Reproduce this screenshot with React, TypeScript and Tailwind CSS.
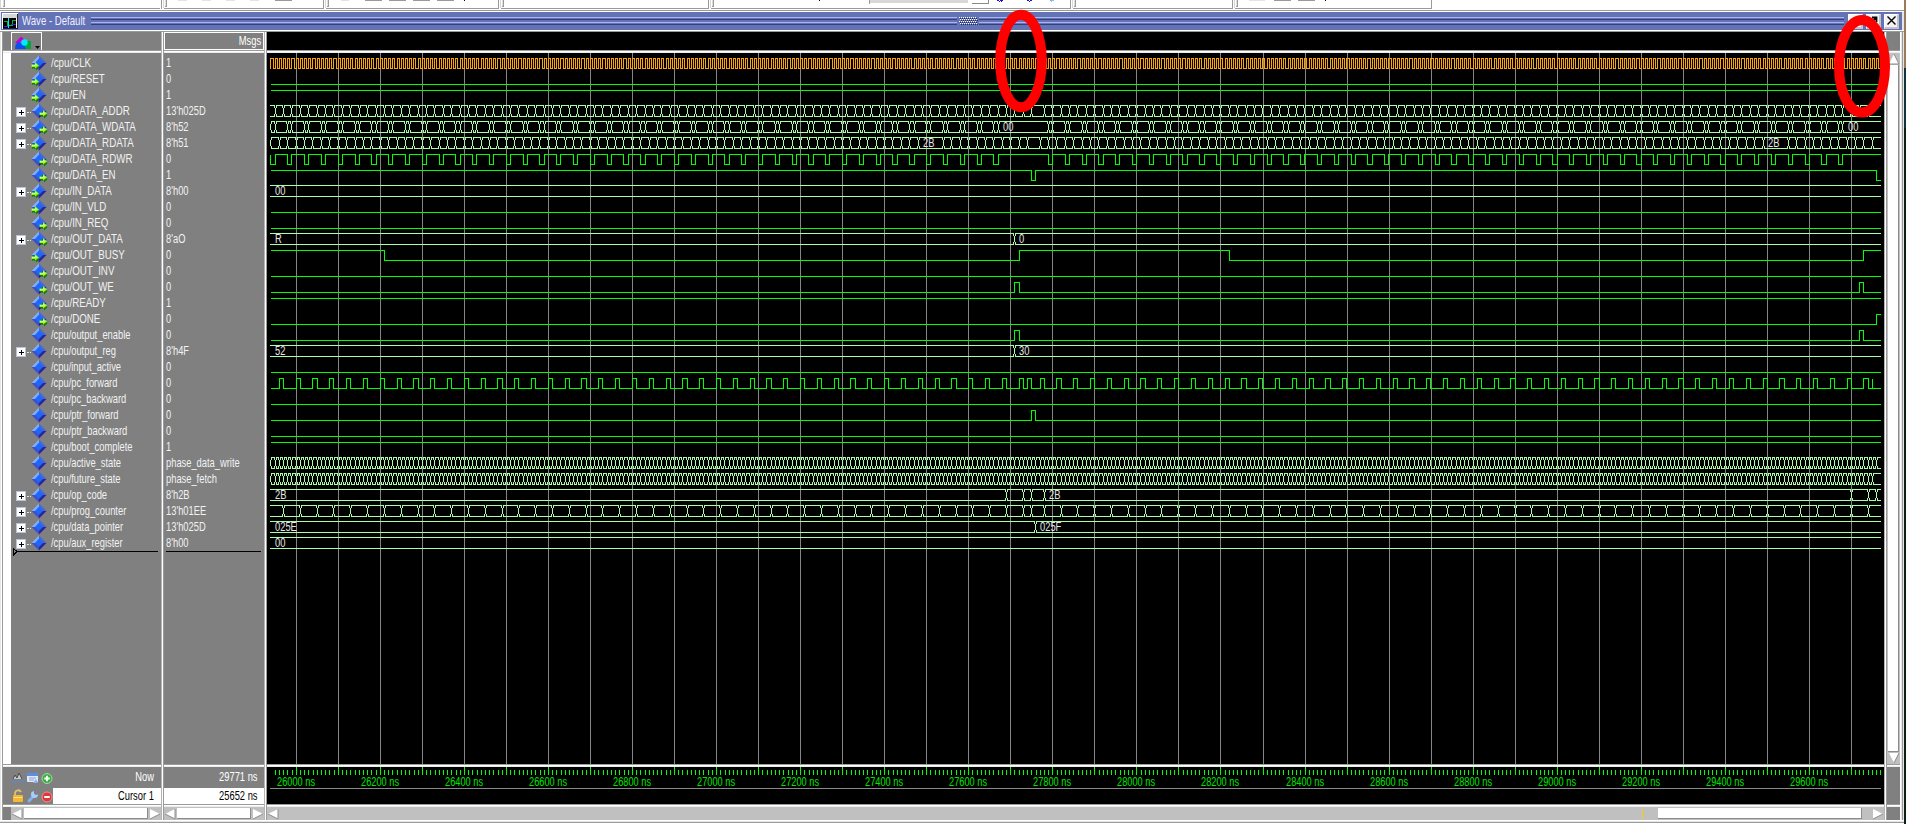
import React from "react";

type Port = "in" | "out" | "none";
type Shape =
  | { kind: "bit"; start: 0 | 1; edges: number[]; clock?: boolean; spikes?: number[]; fromLeft?: boolean }
  | { kind: "bus"; edges: number[]; labels?: [number, string][] };
interface Signal {
  name: string;
  value: string;
  port: Port;
  shape: Shape;
}

const LEFT = 267;
const TOP = 53;
const END_X = 1880;

const timeToX = (t: number) => Math.floor(296.16 + (t - 26000) * 0.4203);
const gridX = (i: number) => (i < 23 ? 296 + 42 * i : 297 + 42 * i);

const range = (from: number, to: number, step: number) => {
  const out: number[] = [];
  for (let t = from; t <= to; t += step) out.push(t);
  return out;
};
const pulses = (starts: number[], width = 10) => starts.flatMap((t) => [t, t + width]);

const low: Shape = { kind: "bit", start: 0, edges: [] };
const high: Shape = { kind: "bit", start: 1, edges: [] };
const flatBus = (label: string): Shape => ({ kind: "bus", edges: [], labels: [[275, label]] });

const memCycles = [...range(25980, 27660, 40), ...range(27790, 29670, 40)];

const signals: Signal[] = [
  { name: "CLK", value: "1", port: "in", shape: { kind: "bit", start: 1, edges: range(25945, 29765, 5), clock: true, fromLeft: true } },
  { name: "RESET", value: "0", port: "in", shape: low },
  { name: "EN", value: "1", port: "in", shape: high },
  { name: "DATA_ADDR", value: "13'h025D", port: "out", shape: { kind: "bus", edges: [...range(25950, 27750, 20), ...range(27780, 29740, 20)] } },
  { name: "DATA_WDATA", value: "8'h52", port: "out", shape: { kind: "bus", edges: [25940, 25950, ...pulses(memCycles)], labels: [[1003, "00"], [1848, "00"]] } },
  { name: "DATA_RDATA", value: "8'h51", port: "in", shape: { kind: "bus", edges: [25940, ...range(25960, 27480, 20), ...range(27540, 27740, 20), ...range(27770, 29490, 20), ...range(29550, 29750, 20)], labels: [[923, "2B"], [1768, "2B"]] } },
  { name: "DATA_RDWR", value: "0", port: "out", shape: { kind: "bit", start: 0, edges: [25950, ...pulses(memCycles)], fromLeft: true } },
  { name: "DATA_EN", value: "1", port: "out", shape: { kind: "bit", start: 1, edges: [27750, 27760, 29760] } },
  { name: "IN_DATA", value: "8'h00", port: "in", shape: flatBus("00") },
  { name: "IN_VLD", value: "0", port: "in", shape: low },
  { name: "IN_REQ", value: "0", port: "out", shape: low },
  { name: "OUT_DATA", value: "8'aO", port: "out", shape: { kind: "bus", edges: [27710], labels: [[275, "R"], [1019, "0"]] } },
  { name: "OUT_BUSY", value: "0", port: "in", shape: { kind: "bit", start: 1, edges: [26210, 27720, 28220, 29730] } },
  { name: "OUT_INV", value: "0", port: "out", shape: low },
  { name: "OUT_WE", value: "0", port: "out", shape: { kind: "bit", start: 0, edges: [27710, 27720, 29720, 29730] } },
  { name: "READY", value: "1", port: "out", shape: high },
  { name: "DONE", value: "0", port: "out", shape: { kind: "bit", start: 0, edges: [29760] } },
  { name: "output_enable", value: "0", port: "none", shape: { kind: "bit", start: 0, edges: [27710, 27720, 29720, 29730] } },
  { name: "output_reg", value: "8'h4F", port: "none", shape: { kind: "bus", edges: [27710], labels: [[275, "52"], [1019, "30"]] } },
  { name: "input_active", value: "0", port: "none", shape: low },
  { name: "pc_forward", value: "0", port: "none", shape: { kind: "bit", start: 0, edges: pulses([...range(25960, 27680, 40), 27720, 27740, ...range(27770, 29730, 40)]), spikes: [29750] } },
  { name: "pc_backward", value: "0", port: "none", shape: low },
  { name: "ptr_forward", value: "0", port: "none", shape: { kind: "bit", start: 0, edges: [27750, 27760] } },
  { name: "ptr_backward", value: "0", port: "none", shape: low },
  { name: "boot_complete", value: "1", port: "none", shape: high },
  { name: "active_state", value: "phase_data_write", port: "none", shape: { kind: "bus", edges: range(25940, 29760, 10) } },
  { name: "future_state", value: "phase_fetch", port: "none", shape: { kind: "bus", edges: range(25940, 29750, 10) } },
  { name: "op_code", value: "8'h2B", port: "none", shape: { kind: "bus", edges: [27690, 27730, 27750, 27780, 29700, 29740, 29760], labels: [[275, "2B"], [1049, "2B"]] } },
  { name: "prog_counter", value: "13'h01EE", port: "none", shape: { kind: "bus", edges: [...range(25970, 27690, 40), 27730, 27750, ...range(27780, 29740, 40)] } },
  { name: "data_pointer", value: "13'h025D", port: "none", shape: { kind: "bus", edges: [27760], labels: [[275, "025E"], [1040, "025F"]] } },
  { name: "aux_register", value: "8'h00", port: "none", shape: flatBus("00") },
];

const expandable = (s: Signal) => s.value.includes("'");

function bitPath(s: Extract<Shape, { kind: "bit" }>, row: number) {
  const y = (v: number) => (v ? 58 : 68) + 16 * row - TOP + 0.5;
  let v: number = s.start;
  const x0 = (s.fromLeft ? 270 : 271) - LEFT;
  let d = s.fromLeft ? `M${x0 + 0.5} ${y(1 - v)}V${y(v)}` : `M${x0} ${y(v)}`;
  for (const t of s.edges) {
    v = 1 - v;
    d += `H${timeToX(t) - LEFT + 0.5}V${y(v)}`;
  }
  d += `H${END_X + 1 - LEFT}`;
  for (const t of s.spikes ?? []) d += `M${timeToX(t) - LEFT + 0.5} ${y(0)}V${y(1)}`;
  return d;
}

function busPath(s: Extract<Shape, { kind: "bus" }>, row: number) {
  const t = 57 + 16 * row - TOP;
  const b = t + 11;
  let d = "";
  let x = 270 - LEFT;
  const line = (a: number, c: number) => {
    if (c > a) d += `M${a} ${t + 0.5}H${c}M${a} ${b + 0.5}H${c}`;
  };
  for (const e of s.edges) {
    const c = timeToX(e) - LEFT;
    line(x, c);
    const m = c + 0.5;
    d += `M${m} ${t + 3}V${b - 2}`;
    if (c - 1 >= 270 - LEFT) d += `M${m - 1} ${t}V${t + 3}M${m - 1} ${b - 2}V${b + 1}`;
    d += `M${m + 1} ${t}V${t + 3}M${m + 1} ${b - 2}V${b + 1}`;
    x = c + 1;
  }
  line(x, END_X + 1 - LEFT);
  return d;
}

const TEXT = "font-['Liberation_Sans',sans-serif]";

const condensed = {
  upper: "origin-left scale-x-[0.75]",
  lower: "origin-left scale-x-[0.718]",
  right: "origin-right scale-x-[0.718]",
};

function Narrow({ fit, children }: { fit: keyof typeof condensed; children: React.ReactNode }) {
  return <span className={`block text-[13px] leading-4 whitespace-nowrap ${condensed[fit]}`}>{children}</span>;
}

function SignalIcon({ port }: { port: Port }) {
  return (
    <svg width="17" height="16" viewBox="0 0 17 16" className="shrink-0">
      <path d="M8 0.500L0.500 8L8 8Z" fill="#7fb0f8" />
      <path d="M8 0.500L15.500 8L8 8Z" fill="#4468d4" />
      <path d="M8 15.500L0.500 8L8 8Z" fill="#3a50c4" />
      <path d="M8 15.500L15.500 8L8 8Z" fill="#2a2496" />
      <path d="M8 3.500L12 8L8 12L4 8Z" fill="#1f66ff" />
      {port !== "none" && (
        <g transform={port === "in" ? "translate(0,0)" : "translate(8,0)"}>
          <path d="M1 11H5V9L8.500 12L5 15.500V13.500H1Z" fill="#127a00" />
          <path d="M0.500 9.500H4V7L8 10.800L4 13.500V12H0.500Z" fill="#8cff1a" />
          <path d="M1 10H4.500V8.500L6 10.500H1Z" fill="#fff" />
        </g>
      )}
    </svg>
  );
}

function NameRow({ s }: { s: Signal }) {
  return (
    <div className="flex h-4 items-center pl-[5px]">
      <div className="flex w-[15px] shrink-0 items-center">
        {expandable(s) && (
          <>
            <svg width="10" height="10" viewBox="0 0 10 10" className="mt-[2px] shrink-0" shapeRendering="crispEdges">
              <rect width="10" height="10" fill="#b8c4dc" />
              <rect x="1" y="1" width="8" height="8" fill="#fff" />
              <path d="M3 5.500H8M5.500 3V8" stroke="#000" />
            </svg>
            <div className="mt-[2px] ml-px w-1 border-t border-dotted border-white/80" />
          </>
        )}
      </div>
      <SignalIcon port={s.port} />
      <div className="ml-[3px]">
        <Narrow fit={s.name === s.name.toUpperCase() ? "upper" : "lower"}>{`/cpu/${s.name}`}</Narrow>
      </div>
    </div>
  );
}

function Waves() {
  return (
    <svg width="1617" height="711" className="block bg-black" shapeRendering="crispEdges">
      {range(0, 37, 1).map((i) => (
        <rect key={i} x={gridX(i) - LEFT} y="0" width="1" height="711" fill="#848484" />
      ))}
      {signals.map((s, i) => (
        <g key={s.name}>
          <path
            d={s.shape.kind === "bit" ? bitPath(s.shape, i) : busPath(s.shape, i)}
            fill="none"
            strokeWidth="1"
            stroke={s.shape.kind === "bus" ? "#a8ffa8" : s.shape.clock ? "#ffa500" : "#00ff00"}
          />
          {s.shape.kind === "bus" &&
            s.shape.labels?.map(([x, t]) => (
              <text key={x} transform={`translate(${x - LEFT} ${67 + 16 * i - TOP}) scale(0.72 1)`} fontSize="13" fill="#e6e6e6" className={TEXT}>
                {t}
              </text>
            ))}
        </g>
      ))}
    </svg>
  );
}

function Ruler() {
  return (
    <svg width="1617" height="37" className="block bg-black" shapeRendering="crispEdges">
      {range(25943, 29770, 1)
        .filter((t) => t % 10 === 0)
        .map((t) => {
          const major = t % 100 === 0;
          const x = major ? gridX((t - 26000) / 100) : Math.floor(296.33 + (t - 26000) * 0.42027);
          return <rect key={t} x={x - LEFT} y={major ? 0 : 3} width="1" height={major ? 8 : 5} fill="#00ff00" />;
        })}
      {range(0, 36, 2).map((i) => (
        <text key={i} transform={`translate(${gridX(i) - LEFT} 19) scale(0.712 1)`} fontSize="13" textAnchor="middle" fill="#00e400" className={TEXT}>
          {`${26000 + i * 100} ns`}
        </text>
      ))}
      <rect x="3" y="21" width="1611" height="1" fill="#8a8a8a" />
    </svg>
  );
}

function Arrow({ dir }: { dir: "left" | "right" | "up" | "down" }) {
  const d = { left: "M11 1V11L1 6Z", right: "M1 1V11L11 6Z", up: "M6 1L11 11H1Z", down: "M1 1H11L6 11Z" }[dir];
  const shade = { left: "M11 1V11L1 6", right: "M1 11L11 6", up: "M11 11H1M6 1L11 11", down: "M11 1L6 11" }[dir];
  return (
    <svg width="12" height="12" viewBox="0 0 12 12" className="block shrink-0">
      <path d={d} fill="#fff" />
      <path d={shade} fill="none" stroke="#8c8c8c" />
    </svg>
  );
}

function Corner() {
  return <div className="h-full w-[8px] shrink-0 bg-[#808080]" />;
}

function HSep() {
  return (
    <div className="flex h-[3px] shrink-0 flex-col">
      <div className="h-px bg-[#9a9a9a]" />
      <div className="h-px bg-white" />
      <div className="h-px bg-[#ececec]" />
    </div>
  );
}

function VSep() {
  return (
    <div className="flex w-[3px] shrink-0">
      <div className="w-px bg-[#b4b4b4]" />
      <div className="w-px bg-white" />
      <div className="w-px bg-[#9a9a9a]" />
    </div>
  );
}

const toolbars: { width: number; marks: [number, number, string][] }[] = [
  { width: 162, marks: [] },
  { width: 162, marks: [[18, 9, "#e4e4e4"], [42, 9, "#e4e4e4"], [66, 9, "#e4e4e4"], [90, 9, "#e4e4e4"], [115, 17, "#9a9a9a"]] },
  { width: 175, marks: [[19, 8, "#e4e4e4"], [43, 17, "#9a9a9a"], [67, 17, "#9a9a9a"], [91, 17, "#9a9a9a"], [115, 17, "#9a9a9a"], [142, 1, "#000"]] },
  { width: 210, marks: [] },
  { width: 362, marks: [[112, 1, "#000"]] },
  { width: 162, marks: [] },
  { width: 199, marks: [[18, 16, "#e4e4e4"], [43, 17, "#9a9a9a"], [67, 17, "#9a9a9a"], [94, 1, "#000"]] },
];

function Toolbars() {
  return (
    <div className="flex h-[10px] shrink-0 bg-white">
      {toolbars.map((b, i) => (
        <svg key={i} width={b.width} height="10" className="block shrink-0" shapeRendering="crispEdges">
          <rect x={i ? 1 : 0} width="1" height="8" fill="#d8d8d8" />
          <rect x="3" width="1" height="7" fill="#dedede" />
          <rect x="4" width="1" height="7" fill="#9a9a9a" />
          <rect x="3" y="6" width="2" height="1" fill="#9a9a9a" />
          <rect y="8" x={i ? 2 : 0} width={b.width - 2} height="1" fill="#9a9a9a" />
          <rect x={b.width - 1} width="1" height="9" fill="#9a9a9a" />
          {b.marks.map(([x, w, c]) => (
            <rect key={x} x={x - 2} width={w} height="1" fill={c} />
          ))}
          {i === 4 && (
            <g>
              <rect x="160" width="1" height="4" fill="#9a9a9a" />
              <rect x="161" width="98" height="3" fill="#d8d8d8" />
              <path d="M263 3.500H279.500V0" fill="none" stroke="#8a8a8a" />
              <path d="M288 0.500H290M291 0.500H294M290 1.500H291M292 1.500H293M318 0.500H320M321 0.500H323M320 1.500H321" stroke="#1a10c8" />
              <path d="M341 0.500H345M342 1.500H343" stroke="#8cb8f0" />
            </g>
          )}
        </svg>
      ))}
    </div>
  );
}

function TitleButton({ children }: { children: React.ReactNode }) {
  return (
    <div className="flex h-[15px] w-[15px] items-center justify-center border-t border-l border-r-2 border-b-2 border-t-white border-r-[#c4c4c4] border-b-[#c4c4c4] border-l-white bg-[#f4f4f4]">
      <svg width="9" height="9" viewBox="0 0 9 9" stroke="#000" strokeWidth="1.400" fill="none">
        {children}
      </svg>
    </div>
  );
}

function TitleBar() {
  return (
    <div className="mx-px flex h-[18px] w-[1901px] shrink-0 items-center bg-[#6472b6]">
      <svg width="16" height="16" viewBox="0 0 16 16" className="ml-px shrink-0" shapeRendering="crispEdges">
        <rect width="16" height="16" fill="#fff" />
        <rect x="1" y="1" width="14" height="4" fill="#d6d6d6" />
        <rect x="1" y="5" width="13" height="10" fill="#000" />
        <path d="M2 8.500H5.500V12H8M8 12.500H10V7.500H14" stroke="#00b43c" fill="none" />
        <path d="M2 13.500H6M9 11.500H14" stroke="#3c28c8" fill="none" />
        <path d="M6.500 5V15" stroke="#00e8ff" />
        <path d="M15.500 1V15.500H1" stroke="#222" fill="none" />
      </svg>
      <div className="mb-px ml-[4px] w-[69px] shrink-0 text-[#eef0ff]">
        <span className="block origin-left scale-x-[0.74] text-[13px] leading-4 whitespace-nowrap">Wave - Default</span>
      </div>
      <svg width="1753" height="18" className="block shrink-0" shapeRendering="crispEdges">
        <path d="M0 5.500H1753M0 10.500H1753" stroke="#a9b4f4" />
        <path d="M0 7.500H1753M0 12.500H1753" stroke="#363f78" />
        <rect x="866" y="4" width="22" height="10" fill="#6472b6" />
        {range(0, 3, 1).map((r) =>
          range(0, 8, 1).map((c) => (
            <g key={`${r}-${c}`}>
              <rect x={868 + c * 2 + (r % 2)} y={5 + r * 2} width="1" height="1" fill="#fff" />
              <rect x={869 + c * 2 + (r % 2)} y={6 + r * 2} width="1" height="1" fill="#222a55" />
            </g>
          )),
        )}
      </svg>
      <div className="ml-[4px] flex gap-[3px]">
        <TitleButton><path d="M1 4.500H8M4.500 1V8" /></TitleButton>
        <TitleButton><path d="M1 8L7 2M3 1.500H7.500V6" strokeWidth="1.800" /></TitleButton>
        <TitleButton><path d="M0.500 0.500L8.500 8.500M8.500 0.500L0.500 8.500" /></TitleButton>
      </div>
    </div>
  );
}

function NamesColumn() {
  return (
    <div className="flex w-[158px] shrink-0 flex-col">
      <div className="flex h-[18px] bg-[#808080]">
        <div className="flex-1 pl-[8px]">
          <div className="h-[18px] w-[31px] border border-b-0 border-white">
            <svg width="29" height="17" viewBox="0 0 29 17">
              <path d="M3 10L9 3.500L12 6L7 10.500Z" fill="#c400d8" />
              <path d="M13 8H19V16H11Z" fill="#00a83c" />
              <path d="M6 9L12 11L14 16H3L3.500 12Z" fill="#0a50f0" />
              <circle cx="12.500" cy="9.500" r="3.200" fill="#00e8ff" />
              <path d="M23 13H28L25.500 16Z" fill="#000" />
            </svg>
          </div>
        </div>
      </div>
      <HSep />
      <div className="flex h-[711px]">
        <div className="w-[8px] shrink-0 bg-white" />
        <div className="flex flex-1 flex-col bg-[#808080] pt-[2px]">
          {signals.map((s) => (
            <NameRow key={s.name} s={s} />
          ))}
          <svg width="150" height="8" className="-mt-[3px] block" shapeRendering="crispEdges">
            <path d="M2.500 0.500V7L6 3.500Z" stroke="#000" fill="none" />
            <rect x="5" y="3" width="142" height="1" fill="#000" />
          </svg>
        </div>
      </div>
      <HSep />
      <div className="flex h-[37px] flex-col bg-[#808080]">
        <div className="flex h-[21px] items-center pr-[7px] pl-[8px]">
          <svg width="46" height="14" viewBox="0 0 46 14">
            <path d="M2 8L4 4L6 7L8 2L11 8" fill="#c8c8c8" stroke="#4a4a4a" />
            <path d="M1 10.500H13M3 9L1 10.500L3 12M11 9L13 10.500L11 12" stroke="#5a88c8" fill="none" />
            <rect x="16" y="2" width="11" height="9" rx="1" fill="#dfe9fa" />
            <rect x="16" y="2" width="11" height="3" fill="#5b8de0" />
            <path d="M18 7H25M18 9H23" stroke="#8aa4d0" />
            <path d="M22 12L25 8L27 12Z" fill="#8cb0e8" />
            <circle cx="36" cy="7.500" r="5" fill="#3cb043" stroke="#a4dca4" />
            <path d="M36 4.800V10.200M33.300 7.500H38.700" stroke="#fff" strokeWidth="1.800" />
          </svg>
          <div className="mb-[2px] ml-auto text-white">
            <Narrow fit="right">Now</Narrow>
          </div>
        </div>
        <div className="flex h-4">
          <svg width="50" height="16" viewBox="0 0 50 16" className="shrink-0">
            <path d="M12 8V5A3.200 3.200 0 0 1 18 4" stroke="#e0c070" strokeWidth="1.800" fill="none" />
            <rect x="10" y="7" width="10" height="7" rx="1" fill="#f5b830" />
            <rect x="11" y="9" width="8" height="1" fill="#ffe08a" />
            <path d="M26 13L31 7.500" stroke="#7fb0f0" strokeWidth="3" strokeLinecap="round" />
            <path d="M31 3A3.500 3.500 0 1 0 35 6.500L32.500 7L31 5.500Z" fill="#a8ccff" />
            <circle cx="44" cy="9" r="5" fill="#e03838" stroke="#f09090" />
            <path d="M41.200 9H46.800" stroke="#fff" strokeWidth="2" />
          </svg>
          <div className="flex flex-1 items-center justify-end bg-white pr-[7px] text-black">
            <Narrow fit="right">Cursor 1</Narrow>
          </div>
        </div>
      </div>
      <HSep />
      <div className="flex h-[13px]">
        <Corner />
        <div className="flex flex-1 items-center bg-[#c0c0c0]">
          <Arrow dir="left" />
          <div className="mx-px h-[11px] flex-1 border-r border-b border-[#8c8c8c] bg-white" />
          <Arrow dir="right" />
        </div>
      </div>
    </div>
  );
}

function ValuesColumn() {
  return (
    <div className="flex w-[100px] shrink-0 flex-col">
      <div className="flex h-[18px] items-center justify-end border border-white bg-[#808080] pr-[2px] text-white">
        <Narrow fit="right">Msgs</Narrow>
      </div>
      <HSep />
      <div className="h-[711px] bg-[#808080] pt-[2px]">
        {signals.map((s) => (
          <div key={s.name} className="flex h-4 pl-[2px]">
            <Narrow fit="lower">{s.value}</Narrow>
          </div>
        ))}
        <div className="ml-[2px] h-px w-[95px] bg-black" />
      </div>
      <HSep />
      <div className="flex h-[37px] flex-col bg-[#808080]">
        <div className="flex h-[21px] items-center justify-end pr-[7px] pb-[2px] text-white">
          <Narrow fit="right">29771 ns</Narrow>
        </div>
        <div className="flex h-4 items-center justify-end bg-white pr-[7px] text-black">
          <Narrow fit="right">25652 ns</Narrow>
        </div>
      </div>
      <HSep />
      <div className="flex h-[13px] items-center bg-[#c0c0c0]">
        <Arrow dir="left" />
        <div className="mx-px h-[11px] w-[74px] border-r border-b border-[#8c8c8c] bg-white" />
        <Arrow dir="right" />
      </div>
    </div>
  );
}

function WaveColumn() {
  return (
    <div className="flex w-[1617px] shrink-0 flex-col">
      <div className="h-[18px] bg-black" />
      <HSep />
      <Waves />
      <HSep />
      <Ruler />
      <HSep />
      <div className="flex h-[13px] items-center bg-[#c0c0c0]">
        <Arrow dir="left" />
        <div className="ml-auto h-[10px] w-px bg-[#ffd000]" />
        <div className="mr-[10px] ml-[15px] h-[11px] w-[204px] border-r border-b border-[#8c8c8c] bg-white" />
        <Arrow dir="right" />
      </div>
    </div>
  );
}

function RightColumn() {
  return (
    <div className="flex w-[13px] shrink-0 flex-col">
      <div className="h-[18px] bg-[#808080]" />
      <HSep />
      <div className="flex h-[711px] flex-col items-center bg-[#c0c0c0]">
        <Arrow dir="up" />
        <div className="w-[11px] flex-1 border-r border-b border-[#8c8c8c] bg-white" />
        <Arrow dir="down" />
      </div>
      <HSep />
      <div className="h-[37px] bg-[#808080]" />
      <HSep />
      <div className="h-[13px] bg-[#808080]" />
    </div>
  );
}

export default function App() {
  return (
    <div className={`relative flex h-[824px] w-[1906px] overflow-hidden bg-[#e6e6e6] text-[#f2f2f2] ${TEXT}`}>
      <div className="flex w-[1904px] shrink-0 flex-col">
        <Toolbars />
        <div className="h-px shrink-0 bg-[#9a9a9a]" />
        <div className="h-px shrink-0 bg-white" />
        <TitleBar />
        <div className="h-px shrink-0 bg-white" />
        <div className="h-px shrink-0 bg-[#9a9a9a]" />
        <div className="flex h-[788px] shrink-0">
          <div className="flex w-[3px] shrink-0">
            <div className="w-px bg-[#e6e6e6]" />
            <div className="w-px bg-white" />
            <div className="w-px bg-[#9a9a9a]" />
          </div>
          <NamesColumn />
          <VSep />
          <ValuesColumn />
          <VSep />
          <WaveColumn />
          <VSep />
          <RightColumn />
          <div className="flex w-[4px] shrink-0">
            <div className="w-px bg-white" />
            <div className="w-px bg-[#e6e6e6]" />
            <div className="w-px bg-[#9a9a9a]" />
            <div className="w-px bg-[#e6e6e6]" />
          </div>
        </div>
        <div className="h-px shrink-0 bg-white" />
        <div className="h-px shrink-0 bg-[#e6e6e6]" />
        <div className="h-px shrink-0 bg-[#9a9a9a]" />
        <div className="h-px shrink-0 bg-white" />
      </div>
      <div className="flex w-[2px] flex-col bg-[#0d2014]">
        <div className="h-[68px] bg-[#9a7a5c]" />
        <div className="h-[60px] bg-[#12343f]" />
      </div>
      <svg width="1906" height="130" className="pointer-events-none absolute top-0 left-0" fill="none" stroke="#ff0000" strokeWidth="10">
        <ellipse cx="1021" cy="61" rx="20.800" ry="46.300" />
        <ellipse cx="1862" cy="66.200" rx="23" ry="46.300" />
      </svg>
    </div>
  );
}
